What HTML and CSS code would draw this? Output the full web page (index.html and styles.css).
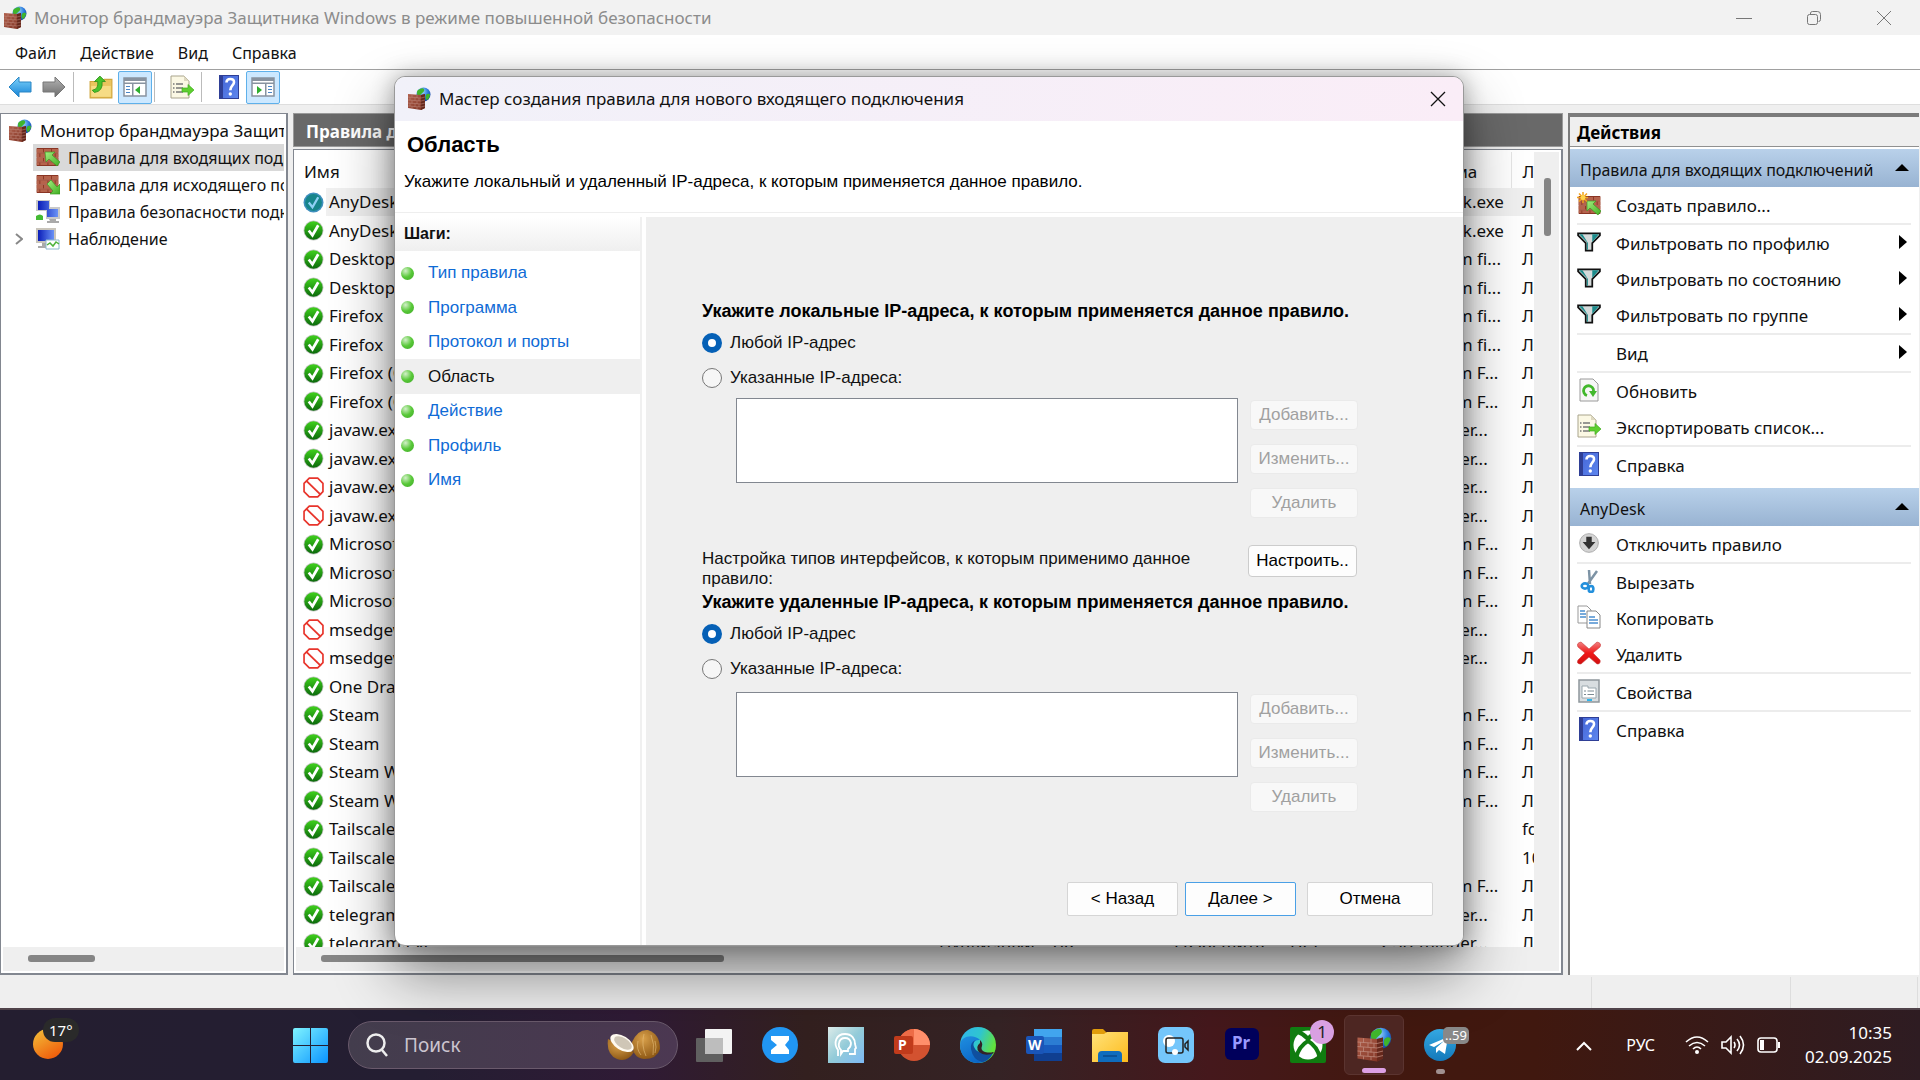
FILE: index.html
```html
<!DOCTYPE html>
<html lang="ru">
<head>
<meta charset="utf-8">
<title>Монитор брандмауэра Защитника Windows</title>
<link rel="stylesheet" href="styles.css">
</head>
<body>
<svg class="defs" aria-hidden="true">
  <defs>
    <linearGradient id="g-green" x1="0" y1="0" x2="0" y2="1"><stop offset="0" stop-color="#3fd01c"/><stop offset="1" stop-color="#0c6a0c"/></linearGradient>
    <linearGradient id="g-arrow" x1="0" y1="0" x2="1" y2="1"><stop offset="0" stop-color="#a4ee80"/><stop offset="1" stop-color="#3fae20"/></linearGradient>
    <linearGradient id="g-back" x1="0" y1="0" x2="0" y2="1"><stop offset="0" stop-color="#7fd3fb"/><stop offset="1" stop-color="#1482d6"/></linearGradient>
    <linearGradient id="g-fwd" x1="0" y1="0" x2="0" y2="1"><stop offset="0" stop-color="#b5b5b5"/><stop offset="1" stop-color="#6c6c6c"/></linearGradient>
    <linearGradient id="g-book" x1="0" y1="0" x2="1" y2="1"><stop offset="0" stop-color="#4668d8"/><stop offset="1" stop-color="#5d86ee"/></linearGradient>
    <linearGradient id="g-screen" x1="0" y1="0" x2="1" y2="0"><stop offset="0" stop-color="#0a1db8"/><stop offset="1" stop-color="#6a92f6"/></linearGradient>
    <linearGradient id="g-win" x1="0" y1="0" x2="1" y2="1"><stop offset="0" stop-color="#7ff4ff"/><stop offset="1" stop-color="#0a94ff"/></linearGradient>
    <linearGradient id="g-sun" x1="0" y1="0" x2="0.6" y2="1"><stop offset="0" stop-color="#f3c33b"/><stop offset="1" stop-color="#ef5f0c"/></linearGradient>
    <linearGradient id="g-folder" x1="0" y1="0" x2="1" y2="1"><stop offset="0" stop-color="#ffe27a"/><stop offset="1" stop-color="#fdbb1c"/></linearGradient>
    <linearGradient id="g-edge" x1="0" y1="0" x2="1" y2="0.4"><stop offset="0" stop-color="#2fb4ee"/><stop offset="0.55" stop-color="#2fc5cf"/><stop offset="1" stop-color="#62e23c"/></linearGradient>
    <linearGradient id="g-edge2" x1="0" y1="0" x2="0.6" y2="1"><stop offset="0" stop-color="#1f8fe0"/><stop offset="1" stop-color="#0a63c4"/></linearGradient>
    <linearGradient id="g-head" x1="0" y1="0" x2="1" y2="1"><stop offset="0" stop-color="#dcebe9"/><stop offset="0.5" stop-color="#93cbd8"/><stop offset="1" stop-color="#7db9f5"/></linearGradient>
    <linearGradient id="g-tg" x1="0" y1="0" x2="0" y2="1"><stop offset="0" stop-color="#34a8e2"/><stop offset="1" stop-color="#1479ba"/></linearGradient>
    <linearGradient id="g-wall" x1="0" y1="0" x2="1" y2="1"><stop offset="0" stop-color="#b0604c"/><stop offset="1" stop-color="#7c3021"/></linearGradient>
    <radialGradient id="g-globe" cx="0.4" cy="0.3" r="0.8"><stop offset="0" stop-color="#a6dcfb"/><stop offset="0.5" stop-color="#2f7fe0"/><stop offset="1" stop-color="#12358c"/></radialGradient>
    <radialGradient id="g-coco" cx="0.4" cy="0.3" r="0.8"><stop offset="0" stop-color="#d9a04a"/><stop offset="1" stop-color="#85500f"/></radialGradient>
    <linearGradient id="g-x" x1="0" y1="0" x2="0" y2="1"><stop offset="0" stop-color="#f08080"/><stop offset="0.5" stop-color="#f01818"/><stop offset="1" stop-color="#d01010"/></linearGradient>
  </defs>
  <symbol id="bricks" viewBox="0 0 24 20">
    <path fill="#8a3524" d="M0 0h24v20H0z"/>
    <path fill="#b5634c" d="M0 1h7v4H0zM8 1h8v4H8zM17 1h7v4h-7zM0 6h3v4H0zM4 6h8v4H4zM13 6h7v4h-7zM21 6h3v4h-3zM0 11h7v4H0zM8 11h8v4H8zM17 11h7v4h-7zM0 16h3v3H0zM4 16h8v3H4zM13 16h7v3h-7zM21 16h3v3h-3z"/>
    <path stroke="#d2937f" stroke-width=".6" fill="none" d="M0 5.500h24M0 10.500h24M0 15.500h24"/>
  </symbol>
  <symbol id="firewall" viewBox="0 0 24 24">
    <circle cx="16.500" cy="7.500" r="7" fill="url(#g-globe)"/>
    <path fill="#3fb52c" d="M13 2c3-2 5 0 4 2s-3 2-4 5-3 0-3-3 1-3 3-4zM19 8c2-2 4-1 4 0s-2 5-3 5-2-3-1-5z"/>
    <path fill="url(#g-wall)" d="M1 7l13 1 4-1v14l-4 2-13-2z"/>
    <path fill="#66281c" d="M14 8l4-1v14l-4 2z"/>
    <path stroke="#c08d80" stroke-width=".5" fill="none" d="M1 10l13 1 4-1M1 13l13 1 4-1M1 16l13 1 4-1M1 19l13 1 4-1M5 7.500v3M10 8v3M3 10v3M8 10.500v3M12 11v3M5 13.500v3M10 14v3M3 16v3M8 16.500v3M12 17v3M5 19.500v2M10 20v2"/>
  </symbol>
  <symbol id="rule-in" viewBox="0 0 24 20"><use href="#bricks" width="23" height="18"/><path fill="url(#g-arrow)" stroke="#3a9a22" stroke-width=".7" d="M9 4h10l-3 3 8 7-3 4-8-7-3 3z"/></symbol>
  <symbol id="rule-out" viewBox="0 0 24 20"><use href="#bricks" width="23" height="18"/><path fill="url(#g-arrow)" stroke="#3a9a22" stroke-width=".7" d="M24 19H14l3-3-6-7 4-4 6 7 3-3z"/></symbol>
  <symbol id="rule-new" viewBox="0 0 24 24"><use href="#bricks" x="1" y="4" width="23" height="18"/><path fill="url(#g-arrow)" stroke="#3a9a22" stroke-width=".7" d="M10 9h9l-3 3 8 7-3 4-8-7-3 3z"/><path stroke="#f2a21c" stroke-width="1.500" d="M6 0v11M0 5.500h11M2 1.500l8 8M10 1.500l-8 8"/><circle cx="6" cy="5.500" r="2.500" fill="#ffd34a"/></symbol>
  <symbol id="security" viewBox="0 0 24 24"><path fill="#c9c9c9" d="M0 0h14v11H0zM10 7h14v12H10z"/><path fill="url(#g-screen)" d="M2 1h11v9H2zM11 9h11v8H11z"/><path fill="#aaa" d="M13 19h7v2h3v2H11v-2h3z"/><path fill="#44bb33" d="M0 16q4-3 7 0v4H0z"/></symbol>
  <symbol id="monitor" viewBox="0 0 24 24"><path fill="#c9c5bb" d="M0 1h20v15H0z"/><path fill="url(#g-screen)" d="M2 3h16v11H2z"/><path fill="#aaa" d="M6 16h7v3h3v2H2v-2h4z"/><path fill="#fff" stroke="#8cb8cc" d="M10 13h13v9H10z"/><path fill="none" stroke="#4eb33b" stroke-width="1.500" d="M11 18l3-2 3 3 3-4 3 2"/></symbol>
  <symbol id="ok" viewBox="0 0 20 20"><circle cx="10" cy="10" r="9.500" fill="#c0c4c0"/><circle cx="10" cy="10" r="8.700" fill="url(#g-green)"/><path fill="none" stroke="#fff" stroke-width="2.600" d="M5.500 10l3.500 4.500L14.500 5"/></symbol>
  <symbol id="ok-selected" viewBox="0 0 20 20"><circle cx="10" cy="10" r="9.500" fill="#3f8fbd"/><circle cx="10" cy="10" r="8" fill="#16858a"/><path fill="none" stroke="#8fd0f5" stroke-width="2.200" d="M5.500 10l3.500 4.500L14.500 5"/></symbol>
  <symbol id="block" viewBox="0 0 20 20"><path fill="#fff" stroke="#e8352c" stroke-width="1.600" d="M6 1h8l5 5v8l-5 5H6l-5-5V6z"/><path stroke="#e8352c" stroke-width="1.800" d="M3 3.500L17 17"/></symbol>
  <symbol id="back" viewBox="0 0 24 22"><path fill="url(#g-back)" stroke="#2a86c4" d="M11 1v5h12v10H11v5L1 11z"/></symbol>
  <symbol id="forward" viewBox="0 0 24 22"><path fill="url(#g-fwd)" stroke="#777" d="M13 1v5H1v10h12v5l10-10z"/></symbol>
  <symbol id="folder-up" viewBox="0 0 22 22"><path fill="#e9c45e" stroke="#d0a53c" d="M1 6h11l2-2h7v17H1z"/><path fill="#f6dc85" d="M2 10h18v10H2z"/><path fill="#48c22b" stroke="#2f931b" stroke-width=".8" d="M3 14q6-1 5-8H5l5-5 5 5h-3q1 9-7 10z"/></symbol>
  <symbol id="pane-left" viewBox="0 0 24 20"><path fill="#fff" stroke="#8893a0" stroke-width="1.500" d="M1 1h22v18H1z"/><path fill="#8893a0" d="M1 1h22v3H1zM1 5.500h22V7H1zM9 7h1.500v12H9z"/><path fill="#4a86c8" d="M3 9h4v1H3zM3 12h4v1H3zM3 15h4v1H3z"/><path fill="#2fae2f" d="M17 9v8l-5-4z"/></symbol>
  <symbol id="pane-right" viewBox="0 0 24 20"><path fill="#fff" stroke="#8893a0" stroke-width="1.500" d="M1 1h22v18H1z"/><path fill="#8893a0" d="M1 1h22v3H1zM1 5.500h22V7H1zM14 7h1.500v12H14z"/><path fill="#4a86c8" d="M17 9h4v1h-4zM17 12h4v1h-4zM17 15h4v1h-4z"/><path fill="#2fae2f" d="M6 9v8l5-4z"/></symbol>
  <symbol id="export" viewBox="0 0 24 24"><path fill="#fbf8e4" stroke="#a9a48c" d="M1 1h13l5 5v17H1z"/><path fill="#ddd8c0" d="M14 1v5h5z"/><path stroke="#777" stroke-width="1.500" d="M6 9h7M6 13h7M6 17h7M3 9h1.500M3 13h1.500M3 17h1.500"/><path fill="#5fcf30" stroke="#3fae20" stroke-width=".7" d="M12 13h6V9.500l6 5.500-6 5.500V17h-6z"/></symbol>
  <symbol id="help" viewBox="0 0 20 24"><path fill="#2f3f96" d="M0 0h20v24H0z"/><path fill="url(#g-book)" d="M4 1h15v22H4z"/><path fill="none" stroke="#fff" stroke-width="2.600" d="M7.500 7.500q0-3.500 3.800-3.500t3.700 3.300c0 3-3.700 3.500-3.700 8"/><circle cx="11.300" cy="19" r="1.700" fill="#fff"/></symbol>
  <symbol id="funnel" viewBox="0 0 22 18"><path fill="#d4dada" stroke="#111" stroke-width="1.600" d="M1 1h20v2l-7 7v7H8v-7L1 3z"/><path fill="#1b8c8c" d="M2 2h3l5 8v6H9v-7zM14 2h6l-6 7z"/></symbol>
  <symbol id="refresh" viewBox="0 0 20 24"><path fill="#f7f7f7" stroke="#9a9a9a" d="M1 1h13l5 5v17H1z"/><path fill="none" stroke="#42b82c" stroke-width="2.800" d="M8 17.500A5 5 0 1 1 14 15"/><path fill="#42b82c" d="M10 13h8l-4 6z"/></symbol>
  <symbol id="disable" viewBox="0 0 22 22"><circle cx="11" cy="11" r="10.300" fill="#d4d4d4" stroke="#a8a8a8"/><path fill="#333" d="M8 4h6v6h4l-7 8-7-8h4z"/></symbol>
  <symbol id="cut" viewBox="0 0 18 24"><path stroke="#7d93a5" stroke-width="2.500" d="M9 1l1 14M17 2L7 16"/><g fill="#fff" stroke="#2490dc" stroke-width="2.600"><ellipse cx="5" cy="17" rx="3.300" ry="2.600"/><ellipse cx="11" cy="20" rx="2.400" ry="3"/></g></symbol>
  <symbol id="copy" viewBox="0 0 24 24"><path fill="#fff" stroke="#999" d="M1 1h9l4 4v13H1z"/><path stroke="#4b8ed0" stroke-width="1.300" d="M3 6h5M3 9h6M3 12h6"/><path fill="#fff" stroke="#888" d="M10 6h9l4 4v13H10z"/><path stroke="#4b8ed0" stroke-width="1.300" d="M12 12h6M12 15h9M12 18h9"/></symbol>
  <symbol id="delete" viewBox="0 0 24 24"><path fill="url(#g-x)" stroke="#c93c3c" stroke-width=".6" d="M4 1l8 7 8-7q5 1 3 5l-7 6 7 7q1 4-3 4l-8-7-8 7q-5 0-3-4l7-7-7-6Q-1 2 4 1z"/></symbol>
  <symbol id="props" viewBox="0 0 22 24"><path fill="#d8dde0" stroke="#8f979c" stroke-width="1.500" d="M1 1h20v22H1z"/><path fill="#fff" stroke="#9aa7ae" d="M4 7h6v2h8v10H4z"/><path stroke="#7d8b93" d="M6 12h2M9.500 12H16M6 15.500h2M9.500 15.500H16"/><path fill="#2eb6ee" d="M9 20h5v2H9z"/></symbol>
</svg>

<div class="screen">
<main class="app">
  <header class="titlebar">
    <svg class="i24"><use href="#firewall"/></svg>
    <h1>Монитор брандмауэра Защитника Windows в режиме повышенной безопасности</h1>
    <div class="controls">
      <button aria-label="Свернуть"><svg viewBox="0 0 16 16"><path d="M0 8.500h16"/></svg></button>
      <button aria-label="Развернуть"><svg viewBox="0 0 16 16"><rect x="1.500" y="4.500" width="10" height="10" rx="2"/><path d="M4.500 4V3a2 2 0 0 1 2-1.500h5a3 3 0 0 1 3 3v5a2 2 0 0 1-2 2"/></svg></button>
      <button aria-label="Закрыть"><svg viewBox="0 0 16 16"><path d="M1 1l14 14M15 1L1 15"/></svg></button>
    </div>
  </header>
  <nav class="menu"><button>Файл</button><button>Действие</button><button>Вид</button><button>Справка</button></nav>
  <div class="toolbar">
    <button aria-label="Назад"><svg><use href="#back"/></svg></button>
    <button aria-label="Вперед"><svg><use href="#forward"/></svg></button>
    <span class="rule"></span>
    <button aria-label="На уровень вверх"><svg><use href="#folder-up"/></svg></button>
    <button class="on" aria-label="Дерево консоли"><svg><use href="#pane-left"/></svg></button>
    <span class="rule"></span>
    <button aria-label="Экспорт"><svg><use href="#export"/></svg></button>
    <span class="rule"></span>
    <button aria-label="Справка"><svg><use href="#help"/></svg></button>
    <button class="on" aria-label="Панель действий"><svg><use href="#pane-right"/></svg></button>
  </div>

  <div class="panes">
    <section class="tree">
      <ul>
        <li class="root"><svg class="i24"><use href="#firewall"/></svg>Монитор брандмауэра Защитника</li>
        <li class="selected"><svg class="i24"><use href="#rule-in"/></svg>Правила для входящих подключений</li>
        <li><svg class="i24"><use href="#rule-out"/></svg>Правила для исходящего подключения</li>
        <li><svg class="i24"><use href="#security"/></svg>Правила безопасности подключения</li>
        <li class="parent"><svg class="chev" viewBox="0 0 8 12"><path d="M1 1l6 5-6 5"/></svg><svg class="i24"><use href="#monitor"/></svg>Наблюдение</li>
      </ul>
      <div class="hscroll"><i></i></div>
    </section>

    <section class="list">
      <h2>Правила для входящих подключений</h2>
      <div class="listbox">
        <div class="rows">
          <table>
            <colgroup><col class="c-name"><col class="c-profile"><col class="c-on"><col class="c-action"><col class="c-over"><col class="c-program"><col></colgroup>
            <thead><tr><th>Имя</th><th>Профиль</th><th>Включено</th><th>Действие</th><th>Частота</th><th>Программа</th><th>Локальный адрес</th></tr></thead>
            <tbody id="rules"></tbody>
          </table>
          <div class="vscroll"><i></i></div>
        </div>
        <div class="hscroll"><i></i></div>
      </div>
    </section>

    <aside class="actions">
      <h2>Действия</h2>
      <h3>Правила для входящих подключений<i></i></h3>
      <ul>
        <li><svg><use href="#rule-new"/></svg>Создать правило...</li>
        <li class="sep sub"><svg class="fun"><use href="#funnel"/></svg>Фильтровать по профилю</li>
        <li class="sub"><svg class="fun"><use href="#funnel"/></svg>Фильтровать по состоянию</li>
        <li class="sub"><svg class="fun"><use href="#funnel"/></svg>Фильтровать по группе</li>
        <li class="sep sub"><svg></svg>Вид</li>
        <li class="sep"><svg><use href="#refresh"/></svg>Обновить</li>
        <li><svg><use href="#export"/></svg>Экспортировать список...</li>
        <li class="sep"><svg><use href="#help"/></svg>Справка</li>
      </ul>
      <h3>AnyDesk<i></i></h3>
      <ul>
        <li><svg class="fun"><use href="#disable"/></svg>Отключить правило</li>
        <li class="sep"><svg><use href="#cut"/></svg>Вырезать</li>
        <li><svg><use href="#copy"/></svg>Копировать</li>
        <li><svg><use href="#delete"/></svg>Удалить</li>
        <li class="sep"><svg><use href="#props"/></svg>Свойства</li>
        <li class="sep"><svg><use href="#help"/></svg>Справка</li>
      </ul>
    </aside>
  </div>
  <footer class="status"><span></span><span></span></footer>
</main>

<section class="dialog" role="dialog" aria-labelledby="dlg-title">
  <header class="dlg-bar">
    <svg class="i24"><use href="#firewall"/></svg><span id="dlg-title">Мастер создания правила для нового входящего подключения</span>
    <button aria-label="Закрыть"><svg viewBox="0 0 16 16"><path d="M1 1l14 14M15 1L1 15"/></svg></button>
  </header>
  <div class="dlg-head"><h2>Область</h2><p>Укажите локальный и удаленный IP-адреса, к которым применяется данное правило.</p></div>
  <div class="dlg-body">
    <nav class="steps">
      <h3>Шаги:</h3>
      <ul>
        <li><a href="#">Тип правила</a></li>
        <li><a href="#">Программа</a></li>
        <li><a href="#">Протокол и порты</a></li>
        <li class="current">Область</li>
        <li><a href="#">Действие</a></li>
        <li><a href="#">Профиль</a></li>
        <li><a href="#">Имя</a></li>
      </ul>
    </nav>
    <form class="form">
      <h3>Укажите локальные IP-адреса, к которым применяется данное правило.</h3>
      <label><input type="radio" name="local" checked>Любой IP-адрес</label>
      <label><input type="radio" name="local">Указанные IP-адреса:</label>
      <div class="pick">
        <textarea aria-label="Локальные IP-адреса"></textarea>
        <div class="pick-buttons"><button type="button" disabled>Добавить...</button><button type="button" disabled>Изменить...</button><button type="button" disabled>Удалить</button></div>
      </div>
      <div class="iface"><p>Настройка типов интерфейсов, к которым применимо данное правило:</p><button type="button">Настроить..</button></div>
      <h3>Укажите удаленные IP-адреса, к которым применяется данное правило.</h3>
      <label><input type="radio" name="remote" checked>Любой IP-адрес</label>
      <label><input type="radio" name="remote">Указанные IP-адреса:</label>
      <div class="pick remote">
        <textarea aria-label="Удаленные IP-адреса"></textarea>
        <div class="pick-buttons"><button type="button" disabled>Добавить...</button><button type="button" disabled>Изменить...</button><button type="button" disabled>Удалить</button></div>
      </div>
      <div class="wizard"><button type="button">&lt; Назад</button><button type="button" class="default">Далее &gt;</button><button type="button" class="cancel">Отмена</button></div>
    </form>
  </div>
</section>

<footer class="taskbar">
  <div class="weather"><svg viewBox="0 0 30 36"><ellipse cx="15" cy="19" rx="15" ry="15" fill="url(#g-sun)"/></svg><span>17°</span></div>
  <button class="start" aria-label="Пуск"><svg viewBox="0 0 35 35"><path fill="url(#g-win)" d="M2 0h15v17H0V2a2 2 0 0 1 2-2zM18 0h15a2 2 0 0 1 2 2v15H18zM0 18h17v17H2a2 2 0 0 1-2-2zM18 18h17v15a2 2 0 0 1-2 2H18z"/></svg></button>
  <label class="search">
    <svg class="glass" viewBox="0 0 24 24"><circle cx="11" cy="10" r="8.500"/><path d="M17 17l5 6"/></svg>
    <input type="text" placeholder="Поиск" aria-label="Поиск">
    <svg class="coco" viewBox="0 0 54 32"><path fill="url(#g-coco)" d="M25 13Q31 0 41 1q12 4 12 19-3 10-16 10-12-1-12-17z"/><path stroke="#e8c07a" stroke-width=".6" fill="none" d="M31 12q-2 8 3 14M37 5q-3 11 2 22M44 6q4 9 2 20M48 12q2 6 0 12"/><path fill="url(#g-coco)" d="M1 10q-2 15 9 20 10 4 17-7z"/><ellipse cx="15" cy="14" rx="13" ry="7" transform="rotate(32 15 14)" fill="#fffaf0"/><ellipse cx="16" cy="14" rx="10" ry="5" transform="rotate(32 16 14)" fill="#cfc6b6"/></svg>
  </label>
  <div class="apps">
    <button aria-label="Представление задач"><svg viewBox="0 0 36 36"><rect x="9" y="2" width="27" height="25" rx="1" fill="#f3f3f3"/><rect y="11" width="27" height="24" rx="1" fill="#606060"/><path fill="#bdbdbd" d="M9 11h18v16H9z"/></svg></button>
    <button aria-label="Zello"><svg viewBox="0 0 36 36"><circle cx="18" cy="18" r="18" fill="#2196f3"/><path fill="#fff" d="M9 9h18v4l-4 5 4 5v4H9v-4l6-5-6-5z"/></svg></button>
    <button aria-label="Профиль"><svg viewBox="0 0 36 36"><path fill="url(#g-head)" d="M0 0h36v36H0z"/><path fill="none" stroke="#fff" stroke-width="1.800" d="M10 29v-6C5 16 8 7 17 7c7 0 10 5 10 10l1 4-1 1v5h-6"/><path fill="none" stroke="#fff" stroke-width="1.800" d="M13 27v-4q-3-3-2-7 1-5 6-5t6 5q0 4-3 6v2h-5z"/></svg></button>
    <button aria-label="PowerPoint"><svg viewBox="0 0 36 36"><circle cx="20" cy="18" r="16" fill="#d35230"/><path fill="#ff8f6b" d="M20 2a16 16 0 0 1 16 16H20z"/><path fill="#ed6c47" d="M20 2v16H4A16 16 0 0 1 20 2z"/><rect y="9" width="19" height="18" rx="2" fill="#c13b1b"/><text x="4" y="23" font-size="14">P</text></svg></button>
    <button aria-label="Edge"><svg viewBox="0 0 36 36"><circle cx="18" cy="18" r="18" fill="url(#g-edge)"/><path fill="url(#g-edge2)" d="M0 18C1 8 14 7 20 13q-7-1-7 6c0 6 9 11 20 7q-5 10-15 10C7 36 0 28 0 18z"/><path fill="#0f4f9e" d="M11 22q-1-7 5-9-4 3-2 7 3 8 19 6-4 8-11 9-9-2-11-13z"/><path fill="#332226" d="M20 13q3 3 2 6-2 4 3 6 5 1 8 0l1 1q-9 4-15-1-4-5 1-9z"/></svg></button>
    <button aria-label="Word"><svg viewBox="0 0 36 36"><path fill="#41a5ee" d="M8 2h28v8H8z"/><path fill="#2b7cd3" d="M8 10h28v8H8z"/><path fill="#185abd" d="M8 18h28v8H8z"/><path fill="#103f91" d="M8 26h28v8H8z"/><rect y="9" width="18" height="18" rx="2" fill="#1a55b8"/><text x="2" y="23" font-size="14">W</text></svg></button>
    <button aria-label="Проводник"><svg viewBox="0 0 36 36"><path fill="#e09c0b" d="M0 4q0-2 2-2h9l4 4v6H0z"/><path fill="url(#g-folder)" d="M0 7h12l3-2h21v30H0z"/><path fill="#0f6cbd" d="M6 35v-7q0-4 4-4h16q4 0 4 4v7z"/><path stroke="#0a4a8c" stroke-width="1.500" d="M11 29h14"/></svg></button>
    <button aria-label="Камера"><svg viewBox="0 0 36 36"><rect width="36" height="36" rx="7" fill="#74c6fb"/><circle cx="11" cy="14" r="6" fill="#fff"/><rect x="8" y="11" width="17" height="15" rx="2" fill="none" stroke="#222" stroke-width="1.500"/><path fill="none" stroke="#222" stroke-width="1.500" d="M27 17l3-3v9l-3-3z"/><circle cx="17" cy="25" r="3" fill="#fff"/></svg></button>
    <button aria-label="Premiere Pro"><svg viewBox="0 0 36 36"><rect x="1" y="1" width="34" height="32" rx="6" fill="#00005b"/><text class="pr" x="8" y="22" font-size="17">Pr</text></svg></button>
    <button aria-label="Xbox"><svg viewBox="0 0 36 36"><rect width="36" height="36" rx="2" fill="#107c10"/><circle cx="18" cy="18" r="14.500" fill="#fff"/><path fill="none" stroke="#107c10" stroke-width="4" d="M6 31q3-12 12-17 9 5 12 17M8 5q6 2 10 7 4-5 10-7"/></svg><span class="count">1</span></button>
    <button class="active" aria-label="Монитор брандмауэра"><svg viewBox="0 0 24 24"><use href="#firewall"/></svg></button>
    <button class="running" aria-label="Telegram"><svg viewBox="0 0 36 36"><circle cx="18" cy="18" r="16" fill="url(#g-tg)"/><path fill="#fff" d="M7 18l19-8-3 17-6-4-3 3v-5l8-7-10 6z"/></svg><span class="unread">..59</span></button>
  </div>
  <div class="tray">
    <button aria-label="Скрытые значки"><svg class="up" viewBox="0 0 16 10"><path d="M1 9l7-7 7 7"/></svg></button>
    <span class="lang">РУС</span>
    <svg viewBox="0 0 24 20"><path d="M1 7q11-10 22 0M4 11q8-7 16 0M8 14q4-4 8 0"/><circle cx="12" cy="17" r="2" class="fill"/></svg>
    <svg viewBox="0 0 24 20"><path d="M1 7h4l5-5v16l-5-5H1zM13 7q2 3 0 6M16 4q5 6 0 12M19 1q7 9 0 18"/></svg>
    <svg viewBox="0 0 24 20"><rect x="1" y="3" width="19" height="14" rx="3"/><path class="fill" d="M3 5h4v10H3zM21 7h2v6h-2z"/></svg>
    <time class="clock">10:35<br>02.09.2025</time>
  </div>
</footer>
</div>
<script src="script.js"></script>
</body>
</html>
```
FILE: styles.css
```css
* { box-sizing: border-box; }
body { margin: 0; font: 17px/24px "Noto Sans", "Open Sans", sans-serif; color: #111; }
h1, h2, h3, p, ul { margin: 0; padding: 0; font-size: inherit; font-weight: inherit; }
ul { list-style: none; }
button { font: inherit; color: inherit; border: 0; background: none; padding: 0; }
svg { flex: none; }
.defs { position: absolute; width: 0; height: 0; }
.i24 { width: 24px; height: 24px; }

.screen { position: relative; display: flex; flex-direction: column; height: 100vh; overflow: hidden; }
.app { flex: 1; min-height: 0; display: flex; flex-direction: column; background: #efefef; }

.titlebar { flex: none; display: flex; align-items: center; gap: 7px; height: 35px; padding: 0 1px 0 3px; background: #f2f2f2; color: #8c8c8c; }
.titlebar h1 { flex: 1; }
.controls { display: flex; }
.controls button { width: 70px; height: 34px; }
.controls svg { width: 16px; height: 16px; fill: none; stroke: #777; display: block; margin: auto; }
.menu { flex: none; display: flex; gap: 24px; height: 35px; padding: 1px 15px 0; background: #fff; border-bottom: 1px solid #a0a0a0; font-size: 16px; }
.toolbar { flex: none; display: flex; align-items: center; height: 35px; padding-left: 3px; background: #fff; border-bottom: 1px solid #dedede; }
.toolbar button { width: 34px; height: 33px; display: grid; place-items: center; border-radius: 2px; }
.toolbar .on { background: #cce8ff; border: 1px solid #5eb0ea; }
.toolbar svg { width: 24px; height: 24px; }
.toolbar .rule { width: 1px; height: 30px; background: #bbb; margin: 0 10px 0 2px; }

.panes { flex: 1; min-height: 0; display: grid; grid-template-columns: 288px minmax(0, 1fr) 351px; grid-template-rows: minmax(0, 1fr); gap: 5px; padding: 8px 1px 0 0; }
.tree { display: flex; flex-direction: column; border: 2px solid #828790; background: #fff; min-width: 0; border-width: 1px 2px 2px 1px; padding: 3px 2px 2px; font-size: 16px; }
.tree ul { flex: 1; overflow: hidden; }
.tree li { display: flex; align-items: center; gap: 8px; height: 27px; margin-left: 30px; padding-left: 3px; white-space: nowrap; }
.tree .root { margin-left: 2px; font-size: 17px; }
.tree .selected { background: #d9d9d9; }
.tree .parent { margin-left: 12px; padding: 0; }
.chev { width: 8px; height: 12px; margin-right: 5px; fill: none; stroke: #888; stroke-width: 2; }
.hscroll { flex: none; height: 24px; padding: 8px 25px; background: #efefef; }
.hscroll i { display: block; width: 67px; height: 7px; border-radius: 3px; background: #858585; }

.list { display: flex; flex-direction: column; min-width: 0; }
.list h2 { flex: none; height: 34px; padding: 6px 12px 0; background: #696969; color: #fff; font-weight: bold; border: 1px solid #9a9a9a; }
.listbox { flex: 1; min-height: 0; display: flex; flex-direction: column; margin-top: 2px; border: 1px solid #828790; border-width: 1px 2px 2px 1px; padding: 2px; background: #fff; }
.rows { flex: 1; min-height: 0; overflow: hidden; display: flex; }
.rows table { flex: 1; table-layout: fixed; width: 100%; height: 0; border-collapse: collapse; }
.c-name { width: 635px; } .c-profile { width: 113px; } .c-on { width: 122px; } .c-action { width: 116px; } .c-over { width: 91px; } .c-program { width: 138px; }
.rows th { height: 36px; padding: 4px 8px 0; font-weight: normal; text-align: left; border-right: 1px solid #e5e5e5; }
.rows th, .rows td { overflow: hidden; white-space: nowrap; }
.rows td { height: 28px; line-height: 28px; padding: 0 8px; }
.rows tr:nth-child(even) td { height: 29px; }
.rows td:first-child { padding: 0 0 0 7px; }
.rows th:last-child, .rows td:last-child { padding-left: 11px; border: 0; }
.rows td div { display: flex; align-items: center; gap: 5px; }
.rows td svg { width: 21px; height: 21px; }
.rows .selected td { background: #f0f0f0; }
.rows .selected td:first-child { background: linear-gradient(90deg, #fff 30px, #f0f0f0 30px); }
.vscroll { flex: none; width: 25px; background: #efefef; padding: 26px 0 0 10px; }
.vscroll i { display: block; width: 7px; height: 58px; border-radius: 3px; background: #858585; }
.listbox .hscroll i { width: 403px; }

.actions { border-left: 2px solid #7b7b7b; border-top: 4px solid #7b7b7b; background: #fff; }
.actions h2 { height: 30px; padding: 4px 7px 0; background: #efefef; border-bottom: 1px solid #909090; font-weight: bold; color: #000; }
.actions h3 { display: flex; align-items: center; justify-content: space-between; height: 38px; margin-top: 2px; padding: 4px 10px 0; background: linear-gradient(#b9d1ea, #98b3d2); white-space: nowrap; font-size: 16px; }
.actions h3 i { border: 7px solid transparent; border-top: 0; border-bottom: 7px solid #000; margin: 0 0 5px; }
.actions ul + h3 { margin-top: 5px; }
.actions li { display: flex; align-items: center; gap: 15px; min-height: 36px; padding: 2px 4px 0 0; margin: 0 8px 0 7px; }
.actions li svg { width: 24px; height: 24px; margin-bottom: 4px; }
.actions li .fun { height: 20px; }
.actions .sep { border-top: 2px solid #ececec; min-height: 38px; }
.actions .sub::after { content: ""; margin: 0 0 5px auto; border: 7px solid transparent; border-right: 0; border-left: 8px solid #000; }
.status { flex: none; display: flex; justify-content: flex-end; height: 33px; padding-top: 2px; margin-right: 2px; }
.status span { width: 199px; border-left: 1px solid #ddd; }
.status span:last-child { width: 128px; border-right: 1px solid #ddd; }

.dialog { position: absolute; left: 394px; top: 76px; width: 1070px; display: flex; flex-direction: column; border: 1px solid #999; border-radius: 11px; overflow: hidden; background: #fff; box-shadow: 0 28px 60px rgba(0,0,0,.45), 0 0 22px rgba(0,0,0,.3); font: 17px/20px "Liberation Sans", Arial, sans-serif; }
.dlg-bar { display: flex; align-items: center; gap: 8px; height: 44px; padding: 0 15px 0 12px; background: linear-gradient(90deg, #f1f1f9, #faedf7); font: 17px/24px "Noto Sans", "Open Sans", sans-serif; }
.dlg-bar button { margin-left: auto; width: 18px; height: 24px; }
.dlg-bar svg { display: block; }
.dlg-bar button svg { width: 16px; height: 24px; fill: none; stroke: #111; stroke-width: 1.300; }
.dlg-head { height: 92px; padding: 12px 12px 0; border-bottom: 1px solid #eee; color: #000; }
.dlg-head h2 { font-size: 22px; line-height: 24px; font-weight: bold; }
.dlg-head p { margin: 15px -3px 0; }
.dlg-body { display: flex; padding-top: 4px; }
.steps { width: 247px; border-right: 2px solid #f0f0f0; margin-right: 4px; }
.steps h3 { height: 34px; padding: 7px 9px; font-size: 16px; font-weight: bold; background: linear-gradient(#fff, #efefef); }
.steps ul { padding-top: 5px; }
.steps li { display: flex; align-items: center; gap: 14px; height: 34px; padding-left: 6px; }
.steps li:nth-child(even) { height: 35px; }
.steps li::before { content: ""; width: 13px; height: 13px; border-radius: 50%; background: radial-gradient(circle at 35% 30%, #d2f0c8, #58c838 50%, #3fa828); }
.steps .current { background: #efefef; }
.steps a { color: #0f6bd6; text-decoration: none; }

.form { flex: 1; display: flex; flex-direction: column; padding: 83px 30px 29px 56px; background: #efefef; }
.form h3 { font-size: 18px; font-weight: bold; white-space: nowrap; line-height: 22px; color: #000; }
.form label { display: flex; align-items: center; gap: 8px; height: 35px; }
.form h3 + label { margin-top: 3px; }
.form input { appearance: none; width: 20px; height: 20px; margin: 0; border: 1px solid #777; border-radius: 50%; background: #f6f6f6; }
.form input:checked { border: 6px solid #0560b6; background: #fff; }
.pick { display: flex; gap: 12px; margin: 3px 0 0 34px; }
.pick.remote { margin-top: 6px; }
.pick textarea { width: 502px; height: 85px; resize: none; border: 1px solid #828790; background: #fff; margin: 0; }
.pick-buttons { display: flex; flex-direction: column; gap: 14px; padding-top: 2px; }
.form button { height: 30px; width: 108px; border: 1px solid #e3e3e3; border-radius: 4px; background: #fdfdfd; color: #000; }
.form button:disabled { color: #a0a0a0; background: #f8f8f8; border-color: #eaeaea; }
.iface { display: flex; gap: 46px; margin: 27px 0 2px; }
.iface p { width: 500px; padding-top: 4px; }
.iface button { width: 109px; height: 32px; border-color: #ccc; }
.form .wizard { display: flex; justify-content: flex-end; gap: 7px; margin-top: 70px; }
.wizard button { height: 34px; width: 111px; border-radius: 2px; border-color: #d5d5d5; }
.wizard .default { border-color: #4aa0e6; }
.wizard .cancel { width: 126px; margin-left: 4px; }

.taskbar { flex: none; display: flex; align-items: center; height: 72px; border-top: 2px solid #50434a; color: #fff; background: linear-gradient(90deg, #241e30 0, #241e32 22%, #2f1a35 33%, #33201f 42%, #352325 52%, #45181c 63%, #42180f 72%, #40180f 80%, #2e1c22); }
.weather { position: relative; width: 34px; margin: 0 226px 0 33px; height: 40px; }
.weather svg { width: 30px; height: 36px; }
.weather span { position: absolute; left: 10px; top: -7px; padding: 0 6px; height: 24px; border-radius: 12px; background: #2a2a2a; font-size: 15px; }
.start { width: 35px; height: 35px; margin-right: 20px; }
.start svg { width: 35px; height: 35px; display: block; }
.search { display: flex; align-items: center; width: 330px; height: 48px; padding: 0 16px; gap: 15px; border: 1px solid #6a5a6c; border-radius: 24px; background: linear-gradient(90deg, #433d4d, #4c3852); }
.search input { flex: 1; min-width: 0; border: 0; padding: 0; background: none; font: 19px/24px "Noto Sans", sans-serif; color: #ddd; outline: 0; }
.search input::placeholder { color: #ccc5cf; opacity: 1; }
.glass { width: 24px; height: 24px; fill: none; stroke: #eee; stroke-width: 2.500; }
.coco { width: 54px; height: 32px; }
.apps { display: flex; gap: 6px; margin-left: 6px; }
.apps button { position: relative; width: 60px; height: 60px; display: grid; place-items: center; border-radius: 6px; }
.apps svg { width: 36px; height: 36px; }
.apps text { font-family: "Noto Sans", sans-serif; font-weight: bold; fill: #fff; }
.apps .pr { fill: #9999ff; }
.apps .active { background: #4d2622; border: 1px solid #5b3430; }
.apps .active::after, .apps .running::after { content: ""; position: absolute; bottom: 1px; width: 24px; height: 5px; border-radius: 3px; background: #dca0e4; }
.apps .running::after { width: 9px; background: #a09090; }
.count { position: absolute; left: 32px; top: 5px; width: 24px; height: 24px; border-radius: 50%; background: #d9a0e2; color: #222; }
.unread { position: absolute; left: 33px; top: 12px; padding: 0 2px; height: 17px; border-radius: 5px; background: #888; font-size: 13px; line-height: 17px; }
.tray { margin-left: auto; display: flex; align-items: center; gap: 12px; padding-right: 28px; }
.tray svg { width: 24px; height: 20px; fill: none; stroke: #fff; stroke-width: 1.600; }
.tray .up { width: 16px; height: 10px; stroke-width: 2; margin-right: 22px; }
.tray .fill { fill: #fff; stroke: none; }
.lang { font-size: 16px; margin-right: 18px; }
.clock { margin-left: 12px; text-align: right; }
```
FILE: script.js
```js
const insider = 'C:\\reminder...';
const programFiles = 'C:\\Program F...';
const programFi = 'C:\\program fi...';
const rules = [
  ['AnyDesk', 'C:\\AnyDesk.exe', 'ok-selected'],
  ['AnyDesk', 'C:\\AnyDesk.exe'],
  ['Desktop App', programFi], ['Desktop App', programFi],
  ['Firefox', programFi], ['Firefox', programFi],
  ['Firefox (C:\\Program Files)', programFiles], ['Firefox (C:\\Program Files)', programFiles],
  ['javaw.exe', insider], ['javaw.exe', insider],
  ['javaw.exe', insider, 'block'], ['javaw.exe', insider, 'block'],
  ['Microsoft Office', programFiles], ['Microsoft Office', programFiles], ['Microsoft Office', programFiles],
  ['msedgewebview2.exe', insider, 'block'], ['msedgewebview2.exe', insider, 'block'],
  ['One Dragon', ''],
  ['Steam', programFiles], ['Steam', programFiles],
  ['Steam Web Helper', programFiles], ['Steam Web Helper', programFiles],
  ['Tailscale-In', '', 'ok', 'fd7a'], ['Tailscale-In', '', 'ok', '100.64'],
  ['Tailscale-Process', programFiles],
  ['telegram.exe', insider], ['telegram.exe', insider]
];
document.getElementById('rules').innerHTML = rules.map(([name, program, icon = 'ok', address = 'Любой']) =>
  `<tr class="${icon === 'ok-selected' ? 'selected' : ''}"><td><div><svg><use href="#${icon}"/></svg>${name}</div></td>` +
  `<td>Публичный</td><td>Да</td><td>Разрешить</td><td>Нет</td><td>${program}</td><td>${address}</td></tr>`).join('');
```
